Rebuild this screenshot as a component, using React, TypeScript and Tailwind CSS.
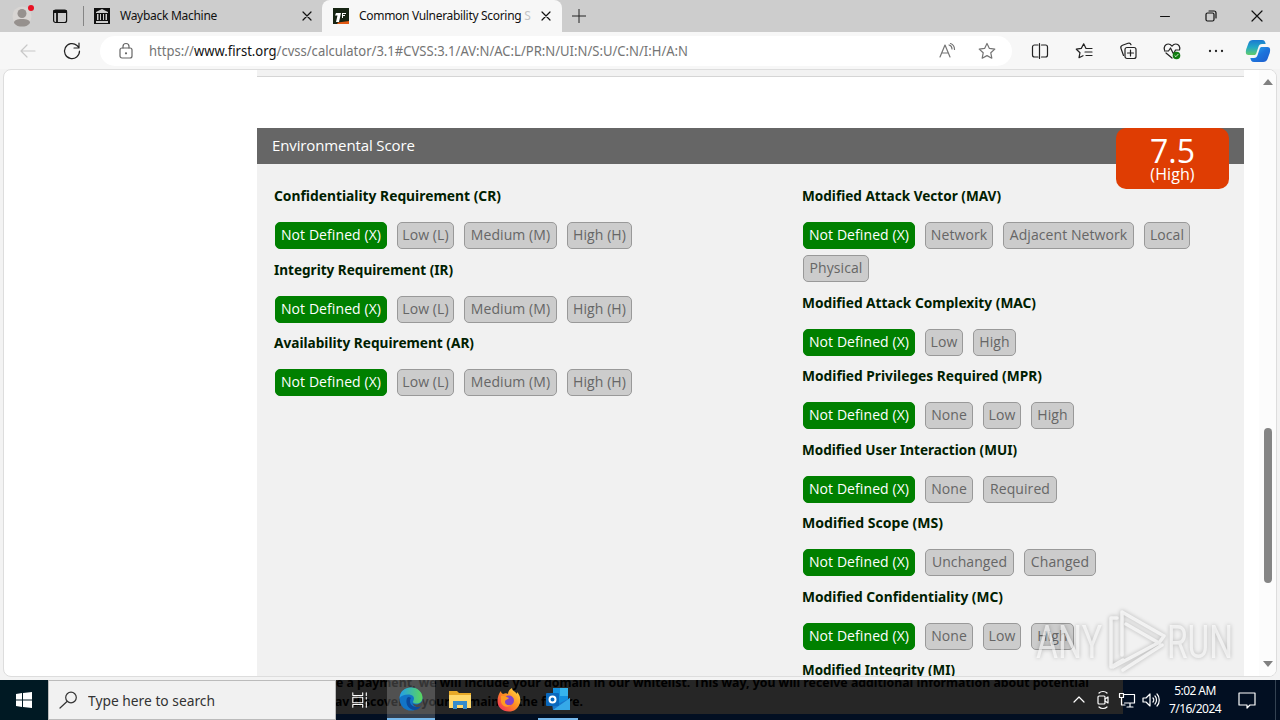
import type { ReactNode } from 'react';

interface Option {
  label: string;
  width: number;
}

interface Metric {
  title: string;
  titleWidth: number;
  options: Option[];
}

const NOT_DEFINED = { label: 'Not Defined (X)', width: 112 };
const NONE = { label: 'None', width: 48 };
const LOW = { label: 'Low', width: 38 };
const HIGH = { label: 'High', width: 43 };

const REQUIREMENT_OPTIONS = [
  NOT_DEFINED,
  { label: 'Low (L)', width: 57 },
  { label: 'Medium (M)', width: 93 },
  { label: 'High (H)', width: 65 },
];

const REQUIREMENTS: Metric[] = [
  { title: 'Confidentiality Requirement (CR)', titleWidth: 227, options: REQUIREMENT_OPTIONS },
  { title: 'Integrity Requirement (IR)', titleWidth: 179, options: REQUIREMENT_OPTIONS },
  { title: 'Availability Requirement (AR)', titleWidth: 200, options: REQUIREMENT_OPTIONS },
];

const MODIFIED: Metric[] = [
  {
    title: 'Modified Attack Vector (MAV)',
    titleWidth: 199,
    options: [
      NOT_DEFINED,
      { label: 'Network', width: 68 },
      { label: 'Adjacent Network', width: 131 },
      { label: 'Local', width: 46 },
      { label: 'Physical', width: 66 },
    ],
  },
  { title: 'Modified Attack Complexity (MAC)', titleWidth: 234, options: [NOT_DEFINED, LOW, HIGH] },
  { title: 'Modified Privileges Required (MPR)', titleWidth: 240, options: [NOT_DEFINED, NONE, LOW, HIGH] },
  {
    title: 'Modified User Interaction (MUI)',
    titleWidth: 215,
    options: [NOT_DEFINED, NONE, { label: 'Required', width: 74 }],
  },
  {
    title: 'Modified Scope (MS)',
    titleWidth: 141,
    options: [NOT_DEFINED, { label: 'Unchanged', width: 89 }, { label: 'Changed', width: 72 }],
  },
  { title: 'Modified Confidentiality (MC)', titleWidth: 201, options: [NOT_DEFINED, NONE, LOW, HIGH] },
  { title: 'Modified Integrity (MI)', titleWidth: 153, options: [] },
];

function Icon({ children, className = 'h-5 w-5' }: { children: ReactNode; className?: string }) {
  return (
    <svg
      viewBox="0 0 20 20"
      fill="none"
      stroke="currentColor"
      strokeWidth="1.2"
      strokeLinecap="round"
      strokeLinejoin="round"
      className={`block flex-shrink-0 ${className}`}
    >
      {children}
    </svg>
  );
}

function CloseIcon() {
  return (
    <Icon className="h-5 w-5">
      <path d="m6 6 8 8m0-8-8 8" />
    </Icon>
  );
}

function TabStrip() {
  return (
    <header className="flex h-8 flex-shrink-0 items-center bg-[#cdcdcd] text-[#111]">
      <div className="ml-3 w-5">
        <svg viewBox="0 0 20 24" className="h-6 w-5 overflow-visible">
          <circle cx="10" cy="12" r="9.5" fill="#d8d5d3" />
          <circle cx="10" cy="9.5" r="4.5" fill="#96918e" />
          <path d="M2 19c0-3 3-4 8-4s8 1 8 4c-2 3-5 3.500-8 3.500S4 22 2 19Z" fill="#96918e" />
          <circle cx="19" cy="4" r="3" fill="#e81123" />
        </svg>
      </div>
      <Icon className="ml-[18px] h-5 w-5">
        <rect x="3.600" y="4" width="13" height="12.500" rx="2" />
        <path d="M4 6h12M4 5h12M7 7v9" strokeWidth="1.800" />
      </Icon>
      <div className="ml-[13px] h-5 w-px bg-[#858585]" />
      <svg viewBox="0 0 16 16" className="ml-2.5 h-4 w-4">
        <path fill="#111" d="M0 0h16v16H0z" />
        <path fill="#ccc" d="M2 4 8 1l6 3v1H2zM2 13h12v2H2zM3 6h1.500v6H3zM6 6h1v6H6zM9 6h1v6H9zM11.500 6H13v6h-1.500z" />
      </svg>
      <span className="ml-[10px] w-[177px] whitespace-nowrap text-xs tracking-[-0.28px]">Wayback Machine</span>
      <CloseIcon />
      <div className="ml-[5px] flex h-full w-[240px] items-center rounded-t-lg bg-[#f7f7f7]">
        <svg viewBox="0 0 16 16" className="ml-[11px] h-4 w-4">
          <path fill="#172514" d="M0 0h16v16H0z" />
          <path fill="#e35a14" d="M5 14.500 16 13v3H4z" />
          <path fill="#fff" d="M3 5h5L6 14H3l1.500-6.500H2zM9 5h4v1h-3v1h2v1h-2v2H9z" />
        </svg>
        <span className="ml-2.5 w-[173px] whitespace-nowrap text-xs tracking-[-0.31px]">
          Common Vulnerability Scoring <span className="text-[#c4c4c4]">S</span>
        </span>
        <div className="ml-1">
          <CloseIcon />
        </div>
      </div>
      <svg viewBox="0 0 16 16" className="ml-[9px] h-4 w-4" stroke="#222">
        <path d="M1 8h14M8 1v14" />
      </svg>
      <div className="ml-auto flex items-center gap-[26px] pr-[13px]">
        <Icon>
          <path d="M5.500 10.500h9" strokeWidth="1" />
        </Icon>
        <Icon>
          <rect x="5" y="7" width="8" height="8" rx="1.500" />
          <path d="M8 5h5c1.500 0 2 1 2 2v5" />
        </Icon>
        <Icon>
          <path d="m5 5 10 10m0-10-10 10" />
        </Icon>
      </div>
    </header>
  );
}

function AddressBar() {
  return (
    <div className="flex h-[37px] flex-shrink-0 items-center bg-[#f7f7f7] pt-px text-[#222]">
      <Icon className="ml-[18px] h-5 w-5 text-[#c8c8c8]">
        <path d="M17 10H3m6-6-6 6 6 6" />
      </Icon>
      <Icon className="ml-6 h-5 w-5">
        <path d="M17.500 10A7.500 7.500 0 1 1 15 4.500L17 6.500M17 2v5h-5" />
      </Icon>
      <div className="ml-[18px] flex h-[30px] w-[912px] items-center rounded-full bg-white">
        <Icon className="ml-4 h-5 w-5 text-[#666]">
          <rect x="4" y="7" width="12" height="10" rx="2" />
          <path d="M7 7V5.500a3 3 0 0 1 6 0V7" />
          <circle cx="10" cy="12.300" r=".5" fill="currentColor" />
        </Icon>
        <svg className="ml-[13px] block h-5 w-[541px] overflow-visible text-sm" viewBox="0 0 541 20" fill="#747474">
          <text y="15" textLength="539" lengthAdjust="spacingAndGlyphs">
            https://<tspan fill="#111">www.first.org</tspan>/cvss/calculator/3.1#CVSS:3.1/AV:N/AC:L/PR:N/UI:N/S:U/C:N/I:H/A:N
          </text>
        </svg>
        <div className="ml-auto mr-[15px] flex gap-5 text-[#747474]">
          <Icon>
            <path d="m3 16 5-12 5 12M4.500 12h7M12 4c2 .5 3 2 3 4M13.500 2.500c3 1 4 3 4 6" />
          </Icon>
          <Icon>
            <path d="m10 2.500 2.400 4.900 5.400.7-4 3.700 1 5.400L10 14.600l-4.800 2.600 1-5.400-4-3.700 5.400-.7Z" />
          </Icon>
        </div>
      </div>
      <div className="ml-[18px] flex gap-6">
        <Icon>
          <path d="M8 4H4.500a2 2 0 0 0-2 2v8a2 2 0 0 0 2 2H8M11.500 4h4a2 2 0 0 1 2 2v8a2 2 0 0 1-2 2h-4M9.500 2.500v15" />
        </Icon>
        <Icon>
          <path d="M12 7.400 9.700 2.800 7.300 7.400l-5 .8 3.700 3.500-1 5 4-2M12 7.500h6M11 11h7M12 14.500h6" />
        </Icon>
        <Icon>
          <rect x="7" y="6.500" width="11" height="11" rx="2" />
          <path d="M12.500 9v6m-3-3h6M5.500 14.500 3 7.500c-.7-2 .2-2.800 1.500-3.300l5.500-2c1.500-.5 2.500 0 3 1.500" />
        </Icon>
        <Icon>
          <path d="M2.500 9c-1-3 .8-6 3.700-6C8 3 9.300 4.300 10 5.200 10.700 4.300 12 3 13.800 3c3 0 4.700 3 3.700 6M4 12l6 5M2.500 10h4l2-3 3 6 2-4h3" />
          <circle cx="14.500" cy="14.500" r="3.800" fill="#107c10" stroke="none" />
          <path d="m12.900 14.700 1 1 2.200-2.400" stroke="#fff" strokeWidth=".8" />
        </Icon>
        <Icon>
          <path d="M4 10h.01M10 10h.01M16 10h.01" strokeWidth="2.300" />
        </Icon>
      </div>
      <svg viewBox="0 0 26 26" className="ml-[19px] h-[26px] w-[26px] flex-shrink-0">
        <defs>
          <linearGradient id="copilotLeft" x1="0" y1="0" x2="0" y2="1">
            <stop stopColor="#1a79d2" />
            <stop offset=".5" stopColor="#24a9c4" />
            <stop offset="1" stopColor="#63cc6a" />
          </linearGradient>
          <linearGradient id="copilotRight" x1="0" y1="0" x2="1" y2="1">
            <stop stopColor="#1e5ccc" />
            <stop offset=".5" stopColor="#1d74dc" />
            <stop offset="1" stopColor="#2cb9ee" />
          </linearGradient>
        </defs>
        <path
          id="copilotHalf"
          d="M8 2h9c2.500 0 3 1.500 3.700 4H17c-2 0-3 1-3.600 3l-2 6c-.5 1.500-1 2-2.400 2H3.500C.5 17 .5 14 1.300 11l2.200-6C4.300 3 5.500 2 8 2Z"
          fill="url(#copilotLeft)"
        />
        <path
          transform="rotate(180 13 13)"
          d="M8 2h9c2.500 0 3 1.500 3.700 4H17c-2 0-3 1-3.600 3l-2 6c-.5 1.500-1 2-2.400 2H3.500C.5 17 .5 14 1.300 11l2.200-6C4.300 3 5.500 2 8 2Z"
          fill="url(#copilotRight)"
        />
      </svg>
    </div>
  );
}

function MetricGroup({ title, titleWidth, options }: Metric) {
  return (
    <div className="mb-[1.5px]">
      <h3 className="mb-[13px] h-[26px] text-[#002000]">
        <svg className="block h-[26px] w-[250px] overflow-visible text-[15px] font-bold" fill="currentColor">
          <text y="18" textLength={titleWidth} lengthAdjust="spacingAndGlyphs">
            {title}
          </text>
        </svg>
      </h3>
      <div className="ml-px flex flex-wrap gap-x-2.5">
        {options.map((o, i) => (
          <button
            key={o.label}
            className={`mb-1.5 h-[27px] whitespace-nowrap rounded-[5px] border pb-px font-['Open_Sans',sans-serif] text-sm leading-6 tracking-[0.08px] ${
              i === 0 ? 'border-[#008000] bg-[#008000] text-white' : 'border-[#999] bg-[#ccc] text-[#666]'
            }`}
            style={{ width: o.width }}
          >
            {o.label}
          </button>
        ))}
      </div>
    </div>
  );
}

function Watermark() {
  return (
    <svg
      viewBox="0 0 210 70"
      className="absolute left-[1022px] top-[535px] h-[70px] w-[210px] drop-shadow-[0_0_2px_rgba(0,0,0,0.35)]"
      fill="#fff"
      fillOpacity=".65"
    >
      <g className="font-['Roboto',sans-serif] text-[46px]">
        <text x="10" y="53" textLength="66" lengthAdjust="spacingAndGlyphs">
          ANY
        </text>
        <text x="141" y="53" textLength="66" lengthAdjust="spacingAndGlyphs">
          RUN
        </text>
      </g>
      <path
        d="M91 13h-6v49l12-7M96 50V7l42 24-5 7-33-19M132 38 87 62M97 65l39-25"
        fill="none"
        stroke="#fff"
        strokeOpacity=".7"
        strokeWidth="3.500"
        strokeLinejoin="round"
        strokeLinecap="round"
      />
    </svg>
  );
}

function CalculatorPage() {
  return (
    <main className="relative mx-[3px] flex h-[608px] overflow-hidden rounded-lg border border-[#ddd] bg-white">
      <div className="ml-[253px] w-[987px]">
        <div className="h-[7px] border-b border-[#d5d5d5] bg-[#f2f2f2]" />
        <section className="mt-[51px] h-[561px] bg-[#f1f1f1]">
          <div className="flex h-9 items-start justify-between bg-[#666] px-[15px] font-['Open_Sans',sans-serif] text-white">
            <h2 className="text-[15px] leading-[35px] tracking-[-0.12px]">Environmental Score</h2>
            <div className="h-[61px] w-[113px] rounded-[10px] bg-[#df3d03] text-center">
              <div className="pt-[7px] text-[32px] leading-8">7.5</div>
              <div className="text-base leading-[15px] tracking-[0.1px]">(High)</div>
            </div>
          </div>
          <div className="flex pl-[17px] pt-[19px]">
            <div className="w-[528px]">
              {REQUIREMENTS.map((m) => (
                <MetricGroup key={m.title} {...m} />
              ))}
            </div>
            <div className="w-[420px]">
              {MODIFIED.map((m) => (
                <MetricGroup key={m.title} {...m} />
              ))}
            </div>
          </div>
        </section>
      </div>
      <div className="ml-auto flex w-[17px] flex-col items-center bg-[#fcfcfc]">
        <svg viewBox="0 0 10 6" className="mt-[9px] h-[6px] w-[10px]" fill="#808080">
          <path d="m5 0 5 6H0z" />
        </svg>
        <div className="mt-[343px] h-[155px] w-2 rounded-full bg-[#858585]" />
        <svg viewBox="0 0 10 6" className="mt-[78px] h-[6px] w-[10px]" fill="#808080">
          <path d="M0 0h10L5 6z" />
        </svg>
      </div>
      <Watermark />
    </main>
  );
}

function EdgeLogo() {
  return (
    <svg viewBox="0 0 24 24" className="h-6 w-6">
      <defs>
        <linearGradient id="edgeTop">
          <stop stopColor="#229ee9" />
          <stop offset="1" stopColor="#5bd75b" />
        </linearGradient>
      </defs>
      <circle cx="12" cy="12" r="11.500" fill="#1275c7" />
      <path d="M.6 11C1 4 6 .5 12 .5c7 0 11.500 5 11.500 10 0 4-3 6-6 6-3.500 0-4-1.500-3-3 2-4-2-6-5-6C5 7.500 2 9 .6 11Z" fill="url(#edgeTop)" />
      <path d="M8 11c-2 5 1 12 8 12 2 0 5-2 6-4-4 2-11 1-11-5 0-2 1-3 1-3s-2-2-4 0Z" fill="#0b4a9c" />
      <path d="M23.500 12c0 3-3 5.500-6.500 5.500-2 0-3.500-.7-3.500-2 0 2 2 4.500 5 4.500 1.500 0 3-.5 4-1 1.500-2 1.500-5 1-7Z" fill="#4a4a4a" />
    </svg>
  );
}

function Taskbar() {
  return (
    <footer className="relative flex h-10 flex-shrink-0 overflow-hidden bg-[#020f22] text-white">
      {/* notice showing through the translucent bar */}
      <div className="absolute left-[336px] top-0 h-[34px] w-[787px] overflow-hidden bg-[#262626] text-black">
        <svg viewBox="0 0 787 34" className="h-[34px] w-[787px] text-[13px] font-bold">
          <text x="0" y="7" textLength="753" lengthAdjust="spacingAndGlyphs">
            e a payment, we will include your domain in our whitelist. This way, you will receive additional information about potential
          </text>
          <text x="-1" y="26" textLength="248" lengthAdjust="spacingAndGlyphs">
            av discovered your domain in the future.
          </text>
        </svg>
      </div>
      <div className="flex w-12 items-center justify-center bg-[#001923]">
        <svg viewBox="0 0 16 16" className="h-4 w-4" fill="#fff">
          <path d="m0 2 6-1v6.500H0zM7 .9 16 0v7.500H7zM0 8.500h6V15l-6-1zM7 8.500h9V16l-9-1z" />
        </svg>
      </div>
      <div className="flex w-[288px] items-center border border-[#bbb] bg-[#f1f1f1] text-[#333]">
        <Icon className="ml-2.5 h-5 w-5">
          <circle cx="12" cy="7.500" r="5.300" />
          <path d="m8 11.500-7 6.500" />
        </Icon>
        <svg className="ml-[9px] h-6 w-[135px] text-[15px]" fill="#333">
          <text y="18" textLength="127" lengthAdjust="spacingAndGlyphs">
            Type here to search
          </text>
        </svg>
      </div>
      <div className="relative flex">
        <div className="flex w-[51px] items-center justify-center pr-[3px]">
          <Icon className="h-[18px] w-[18px]">
            <path d="M2 2v3h11V2M2 18v-3h11v3M2 7h11v6H2zM17 2v3M17 7v2M17 12v6" />
          </Icon>
        </div>
        <div className="flex w-12 items-center justify-center border-b-2 border-[#76b9ed] bg-white/20">
          <EdgeLogo />
        </div>
        <div className="flex w-[49px] items-center justify-center">
          <svg viewBox="0 0 22 20" className="h-5 w-[22px]">
            <path d="M0 1h8l2 2h12v15H0z" fill="#e7a928" />
            <path d="M0 5h22v13H0z" fill="#ffd86b" />
            <path d="M4 19v-8h14v8h-4v-4H8v4z" fill="#348bcb" />
          </svg>
        </div>
        <div className="flex w-[49px] items-center justify-center">
          <svg viewBox="0 0 24 24" className="h-6 w-6">
            <defs>
              <linearGradient id="foxFlame" x1="1" y1="0" x2="0" y2="1">
                <stop stopColor="#ffe54a" />
                <stop offset=".5" stopColor="#ff8b20" />
                <stop offset="1" stopColor="#ef2068" />
              </linearGradient>
            </defs>
            <path d="M4 3c0 2 1 2 2 3 2-1 4-1 5 0C11 3 13 1 15 0c0 3 3 3 5 6V4c3 3 4 7 3 11-2 6-6 8.500-11 8.500C5 23.500.5 19 .5 13 .5 9 2 5 4 3Z" fill="url(#foxFlame)" />
            <circle cx="12" cy="12.500" r="5" fill="#8243c9" />
            <path d="M4 8c3-1 5 1 8 2-1 2-4 1-4 4 0 2 2 4 6 3-3 3-9 2-10-3Z" fill="#ff9b23" />
          </svg>
        </div>
        <div className="ml-[5px] flex w-10 items-center justify-center border-b-2 border-[#76b9ed]">
          <svg viewBox="0 0 24 22" className="h-[22px] w-6">
            <path d="M7 0h15v18H7z" fill="#1490df" />
            <path d="M14 0h8v8h-8z" fill="#36b5ee" />
            <path d="M5 10 14 15l10-5v12H7z" fill="#1976cb" />
            <path d="m24 10-17 12h17z" fill="#36a9e8" />
            <rect y="5" width="13" height="13" rx="1" fill="#0968bd" />
            <circle cx="6.500" cy="11.500" r="3" fill="none" stroke="#fff" strokeWidth="2" />
          </svg>
        </div>
      </div>
      <div className="relative ml-auto flex items-center gap-1">
        <Icon>
          <path d="m5 12 5-5 5 5" />
        </Icon>
        <Icon>
          <path d="M6 3c2-2 6-2 8 0M6 17c2 2 6 2 8 0" />
          <rect x="5" y="6" width="7" height="8" rx="1" />
          <path d="m12 9 3-2v6l-3-2" />
        </Icon>
        <Icon>
          <path d="M7.500 4.500h10v8.500H7.500M10 17h6M13 13v4M2.500 3.500h4v4h-4zM4.500 7.500V15H8" />
        </Icon>
        <Icon>
          <path d="M2 8h3l4-4v12l-4-4H2zM12 8c1 1 1 3 0 4M14 6c2 2 2 6 0 8M16 4c3 3 3 9 0 12" />
        </Icon>
        <div className="ml-0.5 w-[56px] whitespace-nowrap text-center text-xs leading-[18px] tracking-[-0.55px]">
          <div>5:02 AM</div>
          <div>7/16/2024</div>
        </div>
        <Icon className="ml-[10px] mr-[14px] h-5 w-5">
          <path d="M2 3h16v12h-5l-3 3v-3H2z" />
        </Icon>
        <div className="mr-1 h-10 w-px bg-[#344252]" />
      </div>
    </footer>
  );
}

export default function App() {
  return (
    <div className="flex h-[720px] w-[1280px] flex-col overflow-hidden bg-[#f3f3f3] font-['Noto_Sans',sans-serif]">
      <TabStrip />
      <AddressBar />
      <div className="h-[611px]">
        <CalculatorPage />
      </div>
      <Taskbar />
    </div>
  );
}
